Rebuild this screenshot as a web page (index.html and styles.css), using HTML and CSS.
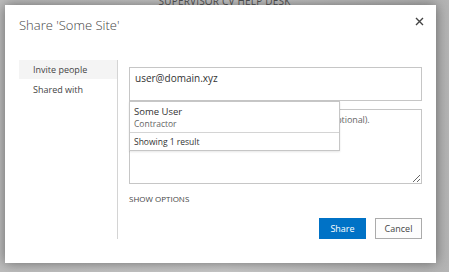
FILE: index.html
```html
<!DOCTYPE html>
<html lang="en">
<head>
  <meta charset="UTF-8">
  <title>Share 'Some Site'</title>
  <link rel="stylesheet" href="styles.css">
</head>
<body>

  <!-- Page behind the dialog -->
  <div class="page">
    <div class="page-title">SUPERVISOR CV HELP DESK</div>
  </div>

  <!-- Share dialog -->
  <div class="dialog">
    <div class="dialog-head">
      <h1>Share 'Some Site'</h1>
      <button class="close" aria-label="Close">
        <svg width="9" height="9" viewBox="0 0 9 9"><path d="M1 1L8 8M8 1L1 8" stroke="#444" stroke-width="1.4"/></svg>
      </button>
    </div>

    <div class="dialog-body">
      <ul class="nav">
        <li class="active">Invite people</li>
        <li>Shared with</li>
      </ul>

      <div class="form">
        <div class="picker">
          <div class="people-input">user@domain.xyz</div>
          <div class="suggest">
            <div class="suggest-item">
              <div class="name">Some User</div>
              <div class="role">Contractor</div>
            </div>
            <div class="suggest-count">Showing 1 result</div>
          </div>
        </div>

        <textarea class="message" placeholder="Include a personal message with this invitation (optional)."></textarea>

        <a class="options" href="#">Show options</a>

        <div class="actions">
          <button class="btn primary">Share</button>
          <button class="btn">Cancel</button>
        </div>
      </div>
    </div>
  </div>

</body>
</html>
```

FILE: styles.css
```css
/* Base */
body {
  margin: 0;
  height: 272px;
  overflow: hidden;
  font-family: "Open Sans", "Liberation Sans", sans-serif;
  color: #444;
  background: linear-gradient(to right, #bdbdbd, #c9c9c9 50%, #b4b4b4);
}

/* Page behind */
.page-title {
  text-align: center;
  margin-top: -5px;
  font-size: 10px;
  line-height: 12px;
  color: #555;
  letter-spacing: 0.2px;
}

/* Dialog */
.dialog {
  position: absolute;
  left: 5px;
  top: 5px;
  width: 431px;
  height: 258px;
  box-sizing: border-box;
  padding: 10px 14px 0 14px;
  background: #fff;
  box-shadow: 0 0 12px rgba(0, 0, 0, 0.45);
}

.dialog-head {
  display: flex;
  justify-content: space-between;
  align-items: flex-start;
  height: 45px;
}

.dialog-head h1 {
  margin: 0;
  font-size: 13px;
  font-weight: 300;
  line-height: 20px;
  color: #444;
}

.close {
  border: none;
  background: none;
  padding: 0;
  margin: 0 -3px 0 0;
  width: 12px;
  height: 12px;
  display: flex;
  align-items: center;
  justify-content: center;
  cursor: pointer;
}

.dialog-body {
  display: flex;
  height: 179px;
}

/* Left navigation */
.nav {
  list-style: none;
  margin: 0;
  padding: 0;
  width: 98px;
  border-right: 1px solid #d4d4d4;
  font-size: 9px;
}

.nav li {
  height: 19px;
  line-height: 19px;
  padding-left: 14px;
  margin-bottom: 1px;
  color: #444;
}

.nav li.active {
  background: #f4f4f4;
}

/* Form */
.form {
  flex: 1;
  padding: 7px 0 0 11px;
  display: flex;
  flex-direction: column;
}

.picker {
  position: relative;
  flex-shrink: 0;
}

.people-input {
  height: 34px;
  box-sizing: border-box;
  border: 1px solid #c6c6c6;
  padding: 3px 5px;
  font-size: 10px;
  line-height: 14px;
  color: #333;
}

.suggest {
  position: absolute;
  left: 0;
  top: 34px;
  width: 211px;
  box-sizing: border-box;
  background: #fff;
  border: 1px solid #c6c6c6;
  box-shadow: 0 1px 2px rgba(0, 0, 0, 0.1);
  z-index: 5;
}

.suggest-item {
  height: 31px;
  box-sizing: border-box;
  padding: 4px 4px 0;
  border-bottom: 1px solid #d4d4d4;
}

.suggest-item .name {
  font-size: 9.5px;
  line-height: 12px;
  color: #333;
}

.suggest-item .role {
  font-size: 8.5px;
  line-height: 12px;
  color: #666;
}

.suggest-count {
  height: 17px;
  line-height: 17px;
  padding: 0 4px;
  font-size: 8.5px;
  color: #333;
}

.message {
  flex-shrink: 0;
  margin: 8px 0 0;
  height: 75px;
  box-sizing: border-box;
  border: 1px solid #c6c6c6;
  padding: 3px 5px;
  font-family: inherit;
  font-size: 9px;
  letter-spacing: -0.1px;
  color: #333;
  resize: vertical;
}

.message::placeholder {
  color: #666;
}

.options {
  margin-top: 10px;
  font-size: 8px;
  line-height: 10px;
  text-transform: uppercase;
  color: #444;
  text-decoration: none;
}

.actions {
  margin-top: 14px;
  display: flex;
  justify-content: flex-end;
  gap: 9px;
}

.btn {
  width: 47px;
  height: 21px;
  box-sizing: border-box;
  border: 1px solid #ababab;
  background: #fdfdfd;
  font-family: inherit;
  font-size: 9px;
  color: #444;
  padding: 0;
}

.btn.primary {
  background: #0072c6;
  border-color: #0072c6;
  color: #fff;
}
```
